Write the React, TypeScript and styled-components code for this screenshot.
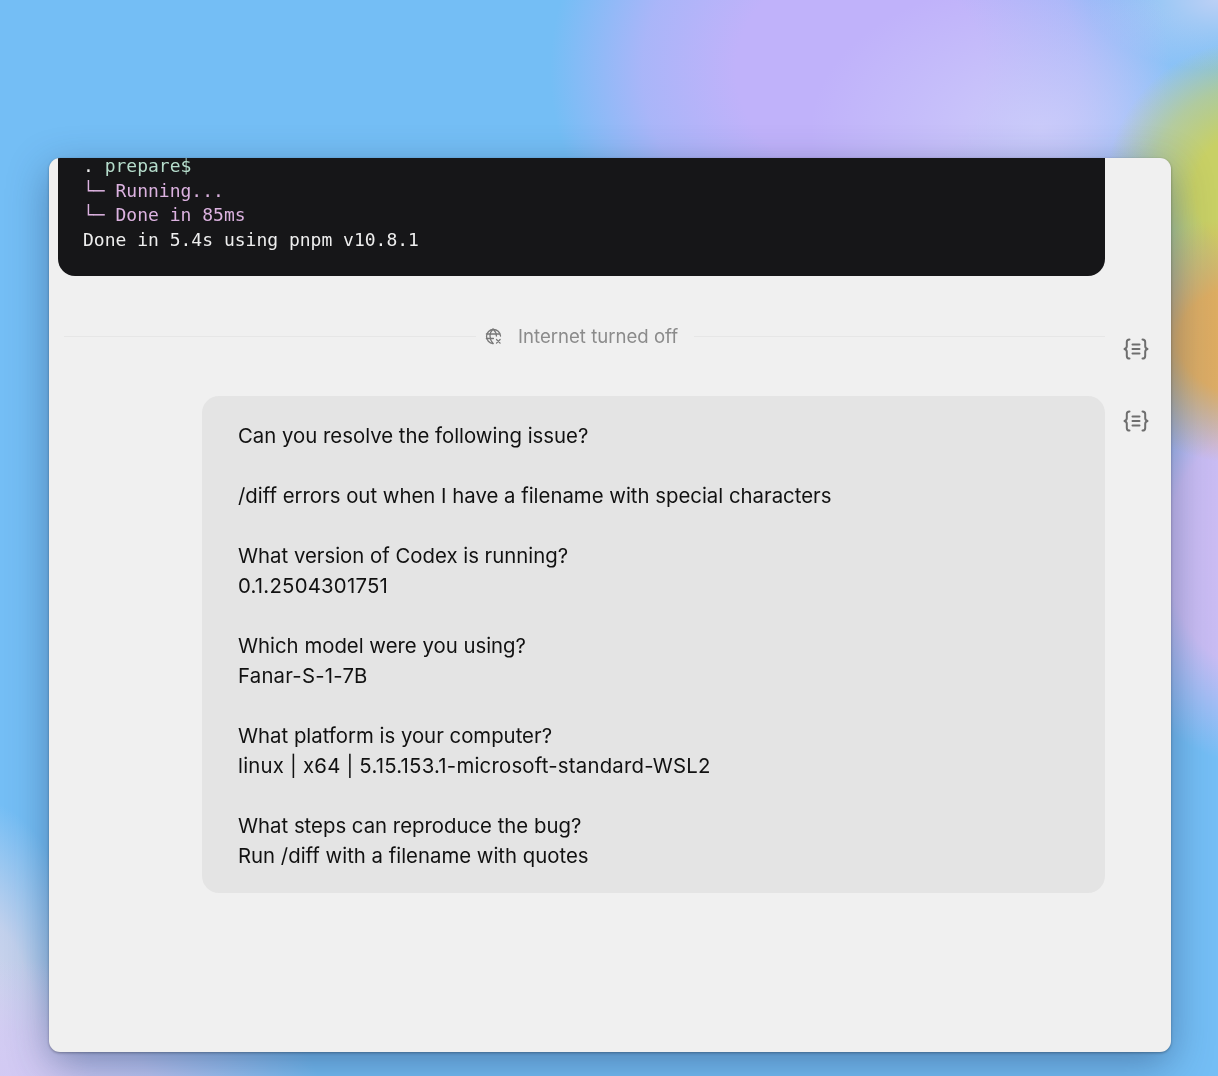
import React from "react";
import styled, { createGlobalStyle } from "styled-components";

const Global = createGlobalStyle`
  html, body { margin: 0; padding: 0; }
  body {
    width: 1218px;
    height: 1076px;
    overflow: hidden;
    background-color: #74bef5;
    background-image:
      radial-gradient(ellipse 170px 125px at 1255px 340px, #dfab5e 0%, rgba(223,171,94,.95) 45%, rgba(223,171,94,0) 100%),
      radial-gradient(ellipse 150px 150px at 1255px 190px, #c8d065 0%, #c8d065 40%, rgba(200,208,101,.6) 70%, rgba(200,208,101,0) 100%),
      radial-gradient(ellipse 160px 215px at 1255px 550px, #cdbcf3 0%, rgba(205,188,243,.95) 55%, rgba(205,188,243,0) 100%),
      radial-gradient(ellipse 300px 130px at 20px 1090px, #d3c9f4 0%, rgba(211,201,244,.75) 45%, rgba(211,201,244,0) 100%),
      radial-gradient(ellipse 110px 240px at -20px 1040px, #d5d5ea 0%, rgba(213,213,234,.8) 50%, rgba(213,213,234,0) 100%),
      radial-gradient(ellipse 230px 150px at 1040px 130px, rgba(207,207,250,.85) 0%, rgba(205,205,250,.4) 55%, rgba(205,205,250,0) 100%),
      radial-gradient(ellipse 310px 270px at 860px 70px, #c0b2fa 0%, #c0b2fa 40%, rgba(192,178,250,.7) 70%, rgba(192,178,250,0) 100%),
      radial-gradient(ellipse 130px 70px at 1218px 0px, #bcd0f5 0%, rgba(188,208,245,0) 100%);
  }
  #root { width: 100%; height: 100%; }
`;

const Stage = styled.div`
  padding: 158px 47px 24px 49px;
  height: 1076px;
  box-sizing: border-box;
`;

const Window = styled.div`
  width: 1122px;
  height: 894px;
  display: flex;
  background: #f0f0f0;
  border-radius: 11px;
  overflow: hidden;
  box-shadow: 0 12px 40px rgba(30, 50, 90, 0.42), 0 1px 3px rgba(0, 0, 0, 0.35);
  font-family: Inter, "Liberation Sans", sans-serif;
  filter: blur(0.35px);
`;

const Thread = styled.main`
  width: 1047px;
  margin-left: 9px;
  display: flex;
  flex-direction: column;
`;

const Terminal = styled.pre`
  margin: 0;
  height: 118px;
  flex: none;
  box-sizing: border-box;
  padding: 0 25px 24px;
  display: flex;
  flex-direction: column;
  justify-content: flex-end;
  overflow: hidden;
  background: #161618;
  border-radius: 0 0 17px 17px;
  font-family: "DejaVu Sans Mono", monospace;
  font-size: 18px;
  line-height: 24.5px;
  color: #eeeeee;
`;

const Line = styled.span<{ $tone?: string }>`
  display: block;
  color: ${(p) => p.$tone || "#eeeeee"};
`;

const Green = styled.span`
  color: #b5dccb;
`;

const Divider = styled.div`
  margin-top: 48px;
  height: 24px;
  display: flex;
  align-items: center;
  gap: 9px;
  color: #8b8b8b;
  font-size: 18.6px;
  &::before,
  &::after {
    content: "";
    height: 1px;
    background: #e6e6e6;
  }
  &::before {
    margin-left: 6px;
    width: 412px;
  }
  &::after {
    flex: 1;
    margin-left: 7px;
  }
`;

const Notice = styled.span`
  display: flex;
  align-items: center;
  gap: 16px;
  white-space: nowrap;
`;

const GlobeIcon = styled.svg`
  width: 17px;
  height: 17px;
  flex: none;
  color: #777777;
`;

const Bubble = styled.section`
  margin: 48px 0 0 144px;
  height: 497px;
  box-sizing: border-box;
  padding: 25px 36px 0;
  background: #e4e4e4;
  border-radius: 17px;
  color: #111111;
  font-size: 20.35px;
  line-height: 30px;
`;

const Para = styled.p`
  margin: 0 0 30px;
`;

const Detail = styled.span`
  letter-spacing: 0.22px;
`;

const Rail = styled.aside`
  margin-left: 18px;
  padding-top: 178px;
  display: flex;
  flex-direction: column;
  gap: 46px;
  color: #6e6e6e;
`;

const BracesIcon = styled.svg`
  width: 26px;
  height: 26px;
  display: block;
`;

const Braces = () => (
  <BracesIcon viewBox="0 0 26 26" fill="none" stroke="currentColor" strokeWidth="2" strokeLinecap="round" strokeLinejoin="round">
    <path d="M6.5 3.5c-2 0-2.7 1-2.7 2.6v4.2c0 1.4-.7 2.2-2.3 2.7 1.6.5 2.3 1.3 2.3 2.7v4.2c0 1.6.7 2.6 2.7 2.6" />
    <path d="M19.5 3.5c2 0 2.7 1 2.7 2.6v4.2c0 1.4.7 2.2 2.3 2.7-1.6.5-2.3 1.3-2.3 2.7v4.2c0 1.6-.7 2.6-2.7 2.6" />
    <path d="M9.5 8.5h7M9.5 13h7M9.5 17.5h7" />
  </BracesIcon>
);

export default function App() {
  return (
    <>
      <Global />
      <Stage>
        <Window>
          <Thread>
            <Terminal>
              <Line>. <Green>prepare$</Green></Line>
              <Line $tone="#dcb2e0">└─ Running...</Line>
              <Line $tone="#dcb2e0">└─ Done in 85ms</Line>
              <Line>Done in 5.4s using pnpm v10.8.1</Line>
            </Terminal>
            <Divider>
              <Notice>
                <GlobeIcon viewBox="0 0 17 17" fill="none" stroke="currentColor" strokeWidth="1.3" strokeLinecap="round">
                  <path d="M8 15.5A7 7 0 1 1 15.5 8" />
                  <path d="M8 1c-4 4-4 10 0 14.5M8 1c2.6 2.4 3.4 4.8 3.4 7" />
                  <path d="M1.4 6h13.2M1.4 10.5h7" />
                  <path d="M11.5 11.5l3.6 3.6M15.1 11.5l-3.6 3.6" />
                </GlobeIcon>
                Internet turned off
              </Notice>
            </Divider>
            <Bubble>
              <Para>Can you resolve the following issue?</Para>
              <Para>/diff errors out when I have a filename with special characters</Para>
              <Para>What version of Codex is running?<br /><Detail>0.1.2504301751</Detail></Para>
              <Para>Which model were you using?<br /><Detail>Fanar-S-1-7B</Detail></Para>
              <Para>What platform is your computer?<br /><Detail>linux | x64 | 5.15.153.1-microsoft-standard-WSL2</Detail></Para>
              <Para>What steps can reproduce the bug?<br />Run /diff with a filename with quotes</Para>
            </Bubble>
          </Thread>
          <Rail>
            <Braces />
            <Braces />
          </Rail>
        </Window>
      </Stage>
    </>
  );
}
